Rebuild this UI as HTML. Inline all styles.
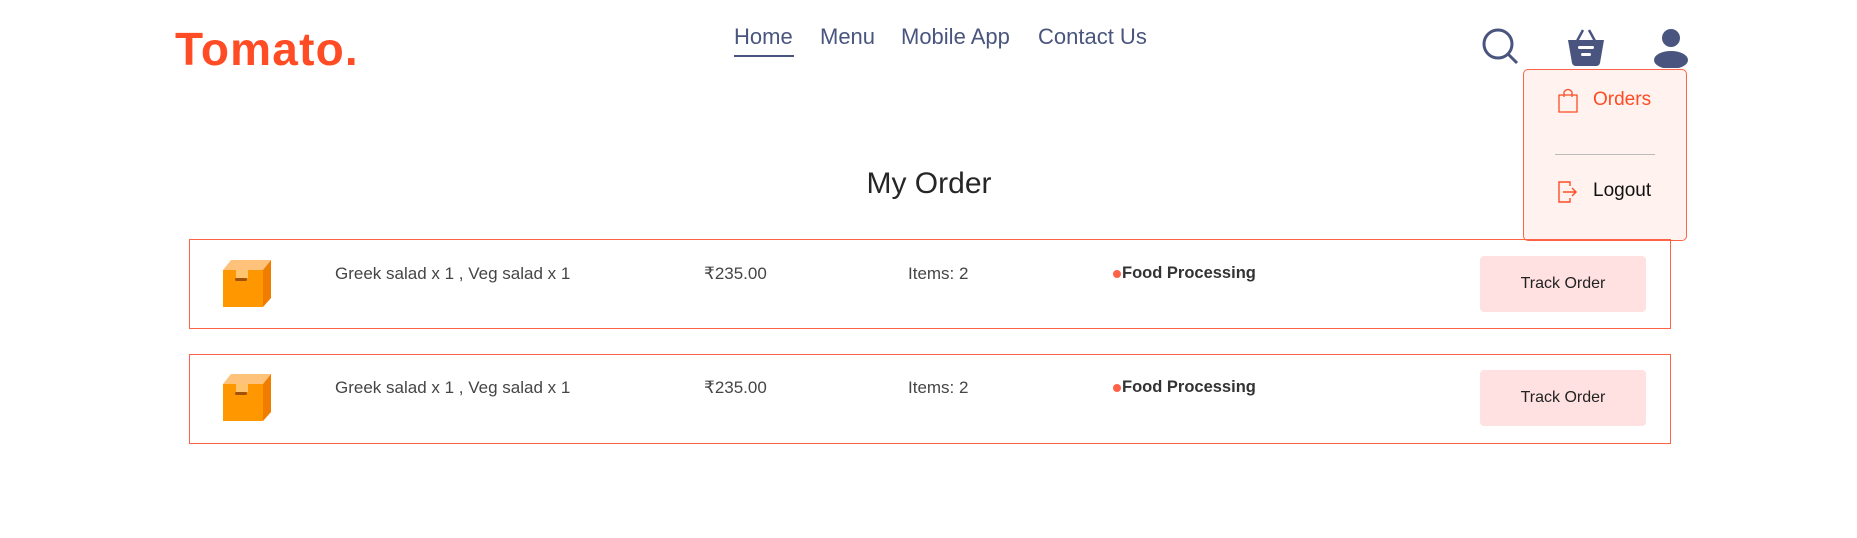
<!DOCTYPE html>
<html><head><meta charset="utf-8"><style>
*{margin:0;padding:0;box-sizing:border-box}
body{width:1857px;height:538px;background:#fff;font-family:"Liberation Sans",sans-serif;position:relative;overflow:hidden}
.abs{position:absolute}
.logo{left:175px;top:22px;font-size:46px;font-weight:bold;color:#ff4c24;letter-spacing:1.2px}
.nav{top:24px;font-size:22px;color:#49557e}
.ul{left:734px;top:55px;width:60px;height:2px;background:#49557e}
.title{left:0;width:1858px;text-align:center;top:167px;font-size:30px;color:#262626}
.row{left:189px;width:1482px;height:90px;border:1px solid #ff6347}
.cell{font-size:17px;color:#454545}
.btn{width:166px;height:56px;background:#ffe1e1;border-radius:4px;font-size:16px;color:#222;display:flex;align-items:center;justify-content:center}
.dd{left:1523px;top:69px;width:164px;height:172px;background:#fff2ef;border:1px solid #ff6347;border-radius:5px}
</style></head><body>
<div class="abs logo">Tomato.</div>
<div class="abs nav" style="left:734px">Home</div>
<div class="abs nav" style="left:820px">Menu</div>
<div class="abs nav" style="left:901px">Mobile App</div>
<div class="abs nav" style="left:1038px">Contact Us</div>
<div class="abs ul"></div>

<svg class="abs" style="left:1482px;top:28px" width="38" height="38" viewBox="0 0 38 38"><circle cx="16" cy="16" r="14" fill="none" stroke="#49557e" stroke-width="3"/><line x1="26" y1="26" x2="35" y2="35" stroke="#49557e" stroke-width="3"/></svg>
<svg class="abs" style="left:1566px;top:28px" width="40" height="40" viewBox="0 0 40 40"><path d="M11 13 L17 2 M29 13 L23 2" stroke="#49557e" stroke-width="2.5" fill="none"/><path d="M2 12 H38 L34 35 Q33 38 30 38 H10 Q7 38 6 35 Z" fill="#49557e"/><rect x="12" y="18" width="16" height="3" rx="1.5" fill="#fff"/><rect x="15" y="25" width="10" height="3" rx="1.5" fill="#fff"/></svg>
<svg class="abs" style="left:1653px;top:28px" width="36" height="40" viewBox="0 0 36 40"><circle cx="18" cy="10" r="9" fill="#49557e"/><ellipse cx="18" cy="32" rx="17" ry="9" fill="#49557e"/></svg>

<div class="abs dd"></div>
<svg class="abs" style="left:1557px;top:87px" width="22" height="27" viewBox="0 0 22 27"><path d="M2 8 H20 V25 H2 Z" fill="none" stroke="#ff4c24" stroke-width="1.3"/><path d="M7 10 V5 Q11 0 15 5 V10" fill="none" stroke="#ff4c24" stroke-width="1.3"/></svg>
<div class="abs" style="left:1593px;top:89px;font-size:19px;color:#ff4c24">Orders</div>
<div class="abs" style="left:1555px;top:154px;width:100px;height:1px;background:#bbb"></div>
<svg class="abs" style="left:1558px;top:181px" width="22" height="22" viewBox="0 0 22 22"><path d="M12 5 V1 H1 V21 H12 V17" fill="none" stroke="#ff4c24" stroke-width="1.4"/><path d="M5 11 H18 M14 7 L18 11 L14 15" fill="none" stroke="#ff4c24" stroke-width="1.4"/></svg>
<div class="abs" style="left:1593px;top:180px;font-size:19px;color:#111">Logout</div>

<div class="abs title">My Order</div>

<div class="abs row" style="top:239px"></div>
<div class="abs row" style="top:354px"></div>

<svg class="abs" style="left:221px;top:259px" width="52" height="50" viewBox="0 0 52 50"><path d="M2 11 L10 1 H50 L42 11 Z" fill="#ffc27a"/><path d="M42 11 L50 1 V39 L42 48 Z" fill="#f07c00"/><rect x="2" y="11" width="40" height="37" fill="#ff9800"/><rect x="15" y="11" width="12" height="8" fill="#ffd08a" opacity=".8"/><rect x="14" y="19" width="12" height="3" rx="1.5" fill="#a0520a"/></svg>
<svg class="abs" style="left:221px;top:373px" width="52" height="50" viewBox="0 0 52 50"><path d="M2 11 L10 1 H50 L42 11 Z" fill="#ffc27a"/><path d="M42 11 L50 1 V39 L42 48 Z" fill="#f07c00"/><rect x="2" y="11" width="40" height="37" fill="#ff9800"/><rect x="15" y="11" width="12" height="8" fill="#ffd08a" opacity=".8"/><rect x="14" y="19" width="12" height="3" rx="1.5" fill="#a0520a"/></svg>

<div class="abs cell" style="left:335px;top:264px">Greek salad x 1 , Veg salad x 1</div>
<div class="abs cell" style="left:704px;top:264px">₹235.00</div>
<div class="abs cell" style="left:908px;top:264px">Items: 2</div>
<div class="abs" style="left:1113px;top:270px;width:8px;height:8px;border-radius:50%;background:#ff6347"></div>
<div class="abs cell" style="left:1122px;top:264px;font-weight:bold;color:#333;font-size:16.5px">Food Processing</div>
<div class="abs btn" style="left:1480px;top:256px">Track Order</div>

<div class="abs cell" style="left:335px;top:378px">Greek salad x 1 , Veg salad x 1</div>
<div class="abs cell" style="left:704px;top:378px">₹235.00</div>
<div class="abs cell" style="left:908px;top:378px">Items: 2</div>
<div class="abs" style="left:1113px;top:384px;width:8px;height:8px;border-radius:50%;background:#ff6347"></div>
<div class="abs cell" style="left:1122px;top:378px;font-weight:bold;color:#333;font-size:16.5px">Food Processing</div>
<div class="abs btn" style="left:1480px;top:370px">Track Order</div>
</body></html>
